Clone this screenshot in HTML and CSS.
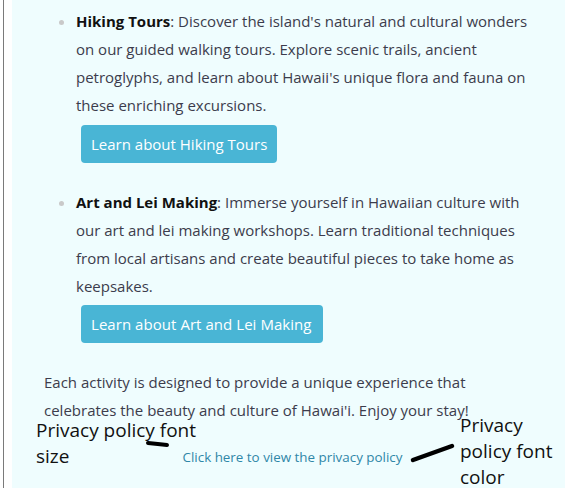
FILE: index.html
```html
<!DOCTYPE html>
<html lang="en">
<head>
<meta charset="utf-8">
<title>Activities</title>
<link rel="stylesheet" href="styles.css">
</head>
<body>
<div class="page">
  <div class="content">
    <ul class="activities">
      <li>
        <strong>Hiking Tours</strong>: Discover the island's natural and cultural wonders on our guided walking tours. Explore scenic trails, ancient petroglyphs, and learn about Hawaii's unique flora and fauna on these enriching excursions.
        <div class="btn-row"><a class="btn" href="#">Learn about Hiking Tours</a></div>
      </li>
      <li>
        <strong>Art and Lei Making</strong>: Immerse yourself in Hawaiian culture with our art and lei making workshops. Learn traditional techniques from local artisans and create beautiful pieces to take home as keepsakes.
        <div class="btn-row"><a class="btn btn-wide" href="#">Learn about Art and Lei Making</a></div>
      </li>
    </ul>
    <p class="closing">Each activity is designed to provide a unique experience that celebrates the beauty and culture of Hawai'i. Enjoy your stay!</p>
    <div class="footer"><a class="privacy" href="#">Click here to view the privacy policy</a></div>

    <div class="note note-size">Privacy policy font<br>size</div>
    <div class="note note-color">Privacy<br>policy font<br>color</div>
    <svg class="marks" width="565" height="488" viewBox="0 0 565 488">
      <path d="M148 443 Q158 444 167 445" stroke="#000" stroke-width="4" stroke-linecap="round" fill="none"/>
      <path d="M413 460 L452 446" stroke="#000" stroke-width="4.5" stroke-linecap="round" fill="none"/>
    </svg>
  </div>
</div>
</body>
</html>
```
FILE: styles.css
```css
html, body {
  margin: 0;
  padding: 0;
  background: #ffffff;
}
.page {
  margin-left: 3px;
  border-left: 1px solid #7a7a7a;
  padding-left: 8px;
  height: 488px;
  overflow: hidden;
}
.content {
  position: relative;
  background: #effdfe;
  height: 100%;
  padding: 7px 28px 0 0;
  font-family: "Open Sans", "Noto Sans", sans-serif;
  font-size: 15px;
  line-height: 28px;
  color: #3c3c4c;
}
.activities {
  margin: 0;
  padding-left: 64px;
}
.activities li {
  margin-bottom: 25px;
}
.activities li:last-child .btn-row {
  margin-top: 5px;
}
.activities li::marker {
  color: #c9c9c9;
}
.activities strong {
  color: #111;
  font-weight: 700;
}
.btn-row {
  margin-top: 6px;
  padding-left: 5px;
  line-height: 0;
}
.btn {
  display: inline-block;
  background: #49b5d5;
  color: #fff;
  text-decoration: none;
  font-size: 15px;
  line-height: 26px;
  padding: 6px 10px;
  border-radius: 4px;
}
.btn-wide {
  padding: 6px 11px 6px 10px;
  letter-spacing: 0.05px;
}
.closing {
  margin: 0;
  padding-left: 32px;
}
.footer {
  margin-top: 23px;
  text-align: center;
  line-height: 18px;
  padding-left: 36px;
}
.privacy {
  color: #2f87a8;
  font-size: 13.4px;
  text-decoration: none;
}
.note {
  position: absolute;
  font-family: "Open Sans", "Noto Sans", sans-serif;
  font-size: 19px;
  line-height: 26px;
  color: #111;
}
.note-size {
  left: 24px;
  top: 417px;
}
.note-color {
  left: 448px;
  top: 412px;
}
.marks {
  position: absolute;
  left: -12px;
  top: 0;
  pointer-events: none;
}
```
